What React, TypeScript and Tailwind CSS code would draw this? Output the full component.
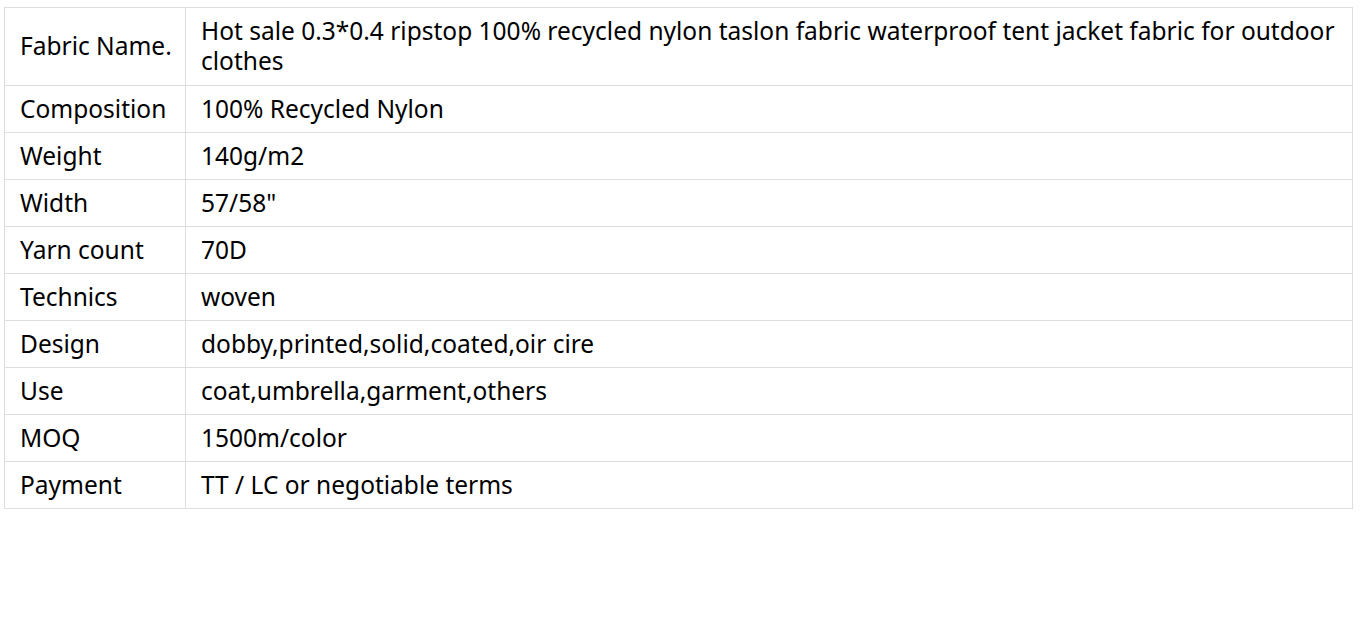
import React from "react";

const rows: [string, string][] = [
  [
    "Fabric Name.",
    "Hot sale 0.3*0.4 ripstop 100% recycled nylon taslon fabric waterproof tent jacket fabric for outdoor clothes",
  ],
  ["Composition", "100% Recycled Nylon"],
  ["Weight", "140g/m2"],
  ["Width", '57/58"'],
  ["Yarn count", "70D"],
  ["Technics", "woven"],
  ["Design", "dobby,printed,solid,coated,oir cire"],
  ["Use", "coat,umbrella,garment,others"],
  ["MOQ", "1500m/color"],
  ["Payment", "TT / LC or negotiable terms"],
];

export default function App() {
  return (
    <div className="min-h-[640px] w-full bg-white pt-[7px] pl-[4px] font-['Noto_Sans',sans-serif] text-[24.5px] leading-[30px] text-black">
      <table className="w-[1349px] table-fixed border-collapse">
        <colgroup>
          <col className="w-[181px]" />
          <col />
        </colgroup>
        <tbody>
          {rows.map(([k, v], i) => (
            <tr key={k}>
              <td
                className={
                  i === 0
                    ? "whitespace-nowrap border border-[#dddddd] px-[15px] pt-[8px] pb-[9px] align-middle"
                    : "whitespace-nowrap border border-[#dddddd] px-[15px] py-[8px] align-middle"
                }
              >
                {k}
              </td>
              <td
                className={
                  i === 0
                    ? "border border-[#dddddd] px-[15px] pt-[8px] pb-[9px] align-middle"
                    : "border border-[#dddddd] px-[15px] py-[8px] align-middle"
                }
              >
                {v}
              </td>
            </tr>
          ))}
        </tbody>
      </table>
    </div>
  );
}
